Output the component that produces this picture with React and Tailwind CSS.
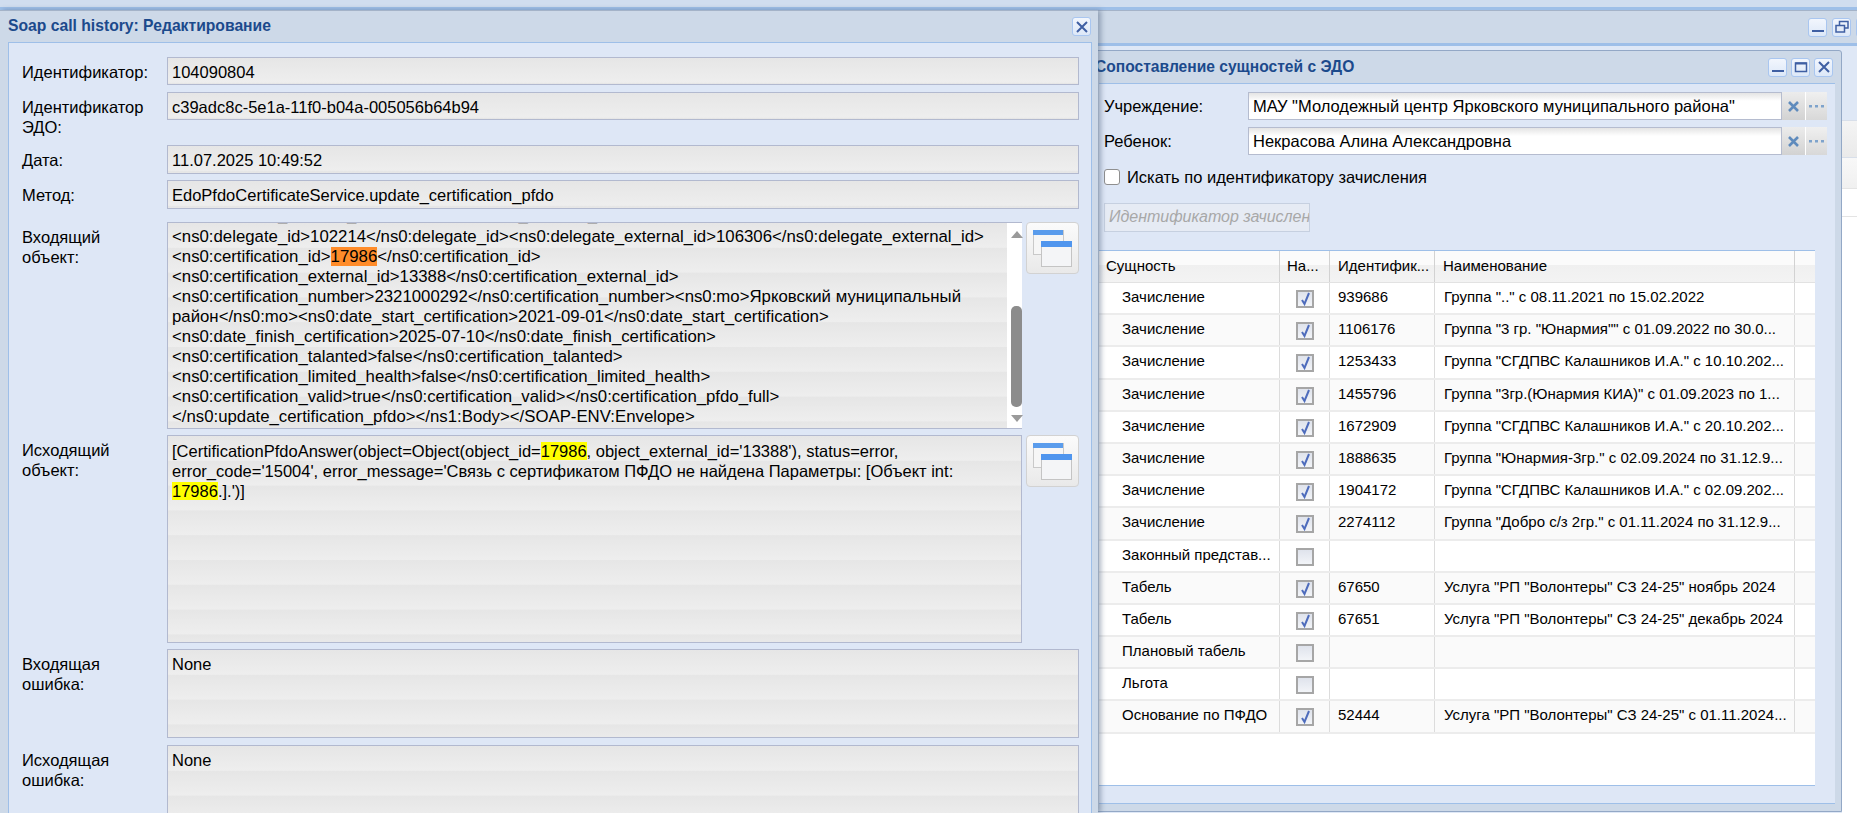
import React from "react";

const stripes =
  "bg-[linear-gradient(#e6e6e6,#eeeeee)] bg-[length:100%_24.8px] bg-repeat";

const gridRows = [
  ["Зачисление", true, "939686", 'Группа ".." с 08.11.2021 по 15.02.2022'],
  ["Зачисление", true, "1106176", 'Группа "3 гр. "Юнармия"" с 01.09.2022 по 30.0...'],
  ["Зачисление", true, "1253433", 'Группа "СГДПВС Калашников И.А." с 10.10.202...'],
  ["Зачисление", true, "1455796", 'Группа "3гр.(Юнармия КИА)" с 01.09.2023 по 1...'],
  ["Зачисление", true, "1672909", 'Группа "СГДПВС Калашников И.А." с 20.10.202...'],
  ["Зачисление", true, "1888635", 'Группа "Юнармия-3гр." с 02.09.2024 по 31.12.9...'],
  ["Зачисление", true, "1904172", 'Группа "СГДПВС Калашников И.А." с 02.09.202...'],
  ["Зачисление", true, "2274112", 'Группа "Добро с/з 2гр." с 01.11.2024 по 31.12.9...'],
  ["Законный представ...", false, "", ""],
  ["Табель", true, "67650", 'Услуга "РП "Волонтеры" СЗ 24-25" ноябрь 2024'],
  ["Табель", true, "67651", 'Услуга "РП "Волонтеры" СЗ 24-25" декабрь 2024'],
  ["Плановый табель", false, "", ""],
  ["Льгота", false, "", ""],
  ["Основание по ПФДО", true, "52444", 'Услуга "РП "Волонтеры" СЗ 24-25" с 01.11.2024...'],
];

function HeaderBtn({ children }) {
  return (
    <div className="w-[19px] h-[19px] shrink-0 rounded-[3px] border border-[#a9c6f0] bg-[linear-gradient(#f2f6fd,#dde8f8)] flex items-center justify-center">
      <svg width="14" height="14" viewBox="0 0 14 14" fill="none" stroke="#3f5fa3" strokeWidth="2">
        {children}
      </svg>
    </div>
  );
}

function CloseIcon() {
  return <path d="M2 2l10 10M12 2L2 12" />;
}

function MinIcon() {
  return <path d="M1 11h12" />;
}

function MaxIcon() {
  return (
    <>
      <rect x="1.5" y="3" width="11" height="8.5" strokeWidth="1.5" />
      <path d="M1.5 3.5h11" />
    </>
  );
}

function RestoreIcon() {
  return (
    <>
      <rect x="4.5" y="1.5" width="8.5" height="6.5" strokeWidth="1.5" />
      <rect x="1" y="5.5" width="8.5" height="6.5" strokeWidth="1.5" fill="#e4ecf9" />
    </>
  );
}

function WindowsIcon() {
  return (
    <svg width="40" height="37" viewBox="0 0 40 37">
      <rect x="0.5" y="0.5" width="30" height="24" fill="#f6f6f6" stroke="#c9c9c9" />
      <rect x="0" y="0" width="30" height="5" fill="#5a9cec" />
      <rect x="8.5" y="11.5" width="30" height="25" fill="#f4f5f7" stroke="#c4c4c4" />
      <rect x="8" y="11" width="31" height="6" fill="#4f95ee" />
    </svg>
  );
}

function ExpandBtn() {
  return (
    <div className="w-[53px] h-[52px] ml-[4px] rounded-[4px] border border-[#d2d2d2] bg-[linear-gradient(#fbfbfb,#e9e9e9)] flex items-start justify-start pt-[7px] pl-[6px]">
      <WindowsIcon />
    </div>
  );
}

function FormRow({ label, className, children }) {
  return (
    <div className={`flex ${className}`}>
      <div className="w-[145px] shrink-0 pt-[5px] leading-[20px]">{label}</div>
      {children}
    </div>
  );
}

function ReadField({ value, height }) {
  return (
    <div className={`w-[912px] ${height} border border-[#b2b9cf] ${stripes} px-[4px] pt-[4px] leading-[20px] whitespace-nowrap`}>
      {value}
    </div>
  );
}

function Mark({ color, children }) {
  return <span className={color}>{children}</span>;
}

function Scrollbar() {
  return (
    <div className="w-[15px] shrink-0 bg-white flex flex-col items-end">
      <div className="w-[11px] h-[83px] pt-[8px]">
        <div className="w-0 h-0 border-x-[6px] border-x-transparent border-b-[7px] border-b-[#9a9a9a]" />
      </div>
      <div className="w-[11px] h-[101px] rounded-[5px] bg-[#8c8c8c]" />
      <div className="w-[11px] pt-[8px]">
        <div className="w-0 h-0 border-x-[6px] border-x-transparent border-t-[7px] border-t-[#9a9a9a]" />
      </div>
    </div>
  );
}

function FormDialog() {
  return (
    <div className="absolute left-0 top-[10px] w-[1098px] h-[803px] bg-[#cdd9e8] border-t border-t-[#a4b3c8] shadow-[3px_0_5px_rgba(70,90,120,0.45)] flex flex-col">
      <div className="h-[31px] shrink-0 flex items-center justify-between pl-[8px] pr-[7px]">
        <span className="font-bold text-[#1c4a8c] text-[15.7px] -mt-[2px]">Soap call history: Редактирование</span>
        <HeaderBtn>
          <CloseIcon />
        </HeaderBtn>
      </div>
      <div className="ml-[8px] w-[1084px] flex-1 bg-[#dee7f6] border-x border-t border-[#9ebfe8] pl-[13px] pt-[14px] overflow-hidden text-black">
        <FormRow label="Идентификатор:" className="h-[28px]">
          <ReadField value="104090804" height="h-[28px]" />
        </FormRow>
        <FormRow label={<>Идентификатор<br />ЭДО:</>} className="h-[46px] mt-[7px]">
          <ReadField value="c39adc8c-5e1a-11f0-b04a-005056b64b94" height="h-[28px]" />
        </FormRow>
        <FormRow label="Дата:" className="h-[29px] mt-[7px]">
          <ReadField value="11.07.2025 10:49:52" height="h-[29px]" />
        </FormRow>
        <FormRow label="Метод:" className="h-[29px] mt-[6px]">
          <ReadField value="EdoPfdoCertificateService.update_certification_pfdo" height="h-[29px]" />
        </FormRow>

        <FormRow label={<>Входящий<br />объект:</>} className="h-[207px] mt-[13px]">
          <div className={`w-[855px] h-[207px] border-t border-b border-l border-[#b2b9cf] flex ${stripes}`}>
            <div className="flex-1 overflow-hidden px-[4px] text-[16.8px] leading-[20px] whitespace-nowrap">
              <div className="h-[20px] -mt-[16px] -translate-y-[2px]">{"<ns0:delegate_external_name></ns0:delegate_external_name>"}</div>
              <div>{"<ns0:delegate_id>102214</ns0:delegate_id><ns0:delegate_external_id>106306</ns0:delegate_external_id>"}</div>
              <div>
                {"<ns0:certification_id>"}
                <Mark color="bg-[#ff8c2a]">17986</Mark>
                {"</ns0:certification_id>"}
              </div>
              <div>{"<ns0:certification_external_id>13388</ns0:certification_external_id>"}</div>
              <div>{"<ns0:certification_number>2321000292</ns0:certification_number><ns0:mo>Ярковский муниципальный"}</div>
              <div>{"район</ns0:mo><ns0:date_start_certification>2021-09-01</ns0:date_start_certification>"}</div>
              <div>{"<ns0:date_finish_certification>2025-07-10</ns0:date_finish_certification>"}</div>
              <div>{"<ns0:certification_talanted>false</ns0:certification_talanted>"}</div>
              <div>{"<ns0:certification_limited_health>false</ns0:certification_limited_health>"}</div>
              <div>{"<ns0:certification_valid>true</ns0:certification_valid></ns0:certification_pfdo_full>"}</div>
              <div>{"</ns0:update_certification_pfdo></ns1:Body></SOAP-ENV:Envelope>"}</div>
            </div>
            <Scrollbar />
          </div>
          <ExpandBtn />
        </FormRow>

        <FormRow label={<>Исходящий<br />объект:</>} className="h-[208px] mt-[6px]">
          <div className={`w-[855px] h-[208px] border border-[#b2b9cf] ${stripes} px-[4px] pt-[5px] leading-[20px] whitespace-nowrap`}>
            <div>
              {"[CertificationPfdoAnswer(object=Object(object_id="}
              <Mark color="bg-[#ffff00]">17986</Mark>
              {", object_external_id='13388'), status=error,"}
            </div>
            <div>{"error_code='15004', error_message='Связь с сертификатом ПФДО не найдена Параметры: [Объект int:"}</div>
            <div>
              <Mark color="bg-[#ffff00]">17986</Mark>
              {".].')]"}
            </div>
          </div>
          <ExpandBtn />
        </FormRow>

        <FormRow label={<>Входящая<br />ошибка:</>} className="h-[89px] mt-[6px]">
          <ReadField value="None" height="h-[89px]" />
        </FormRow>
        <FormRow label={<>Исходящая<br />ошибка:</>} className="h-[89px] mt-[7px]">
          <ReadField value="None" height="h-[89px]" />
        </FormRow>
      </div>
    </div>
  );
}

function PickerField({ value, className = "" }) {
  return (
    <div className={`flex h-[28px] ${className}`}>
      <div className="w-[534px] border border-[#b5bccf] bg-[linear-gradient(#e4e4e4,#ffffff_8px)] pl-[4px] leading-[27px] whitespace-nowrap">
        {value}
      </div>
      <div className="w-[24px] bg-[linear-gradient(#ececec,#d2d2d2)] flex items-center justify-center border-r border-white">
        <svg width="11" height="11" viewBox="0 0 11 11" fill="none" stroke="#5f8bbd" strokeWidth="2.6">
          <path d="M1 1l9 9M10 1l-9 9" />
        </svg>
      </div>
      <div className="w-[21px] bg-[linear-gradient(#f0f0f0,#d8d8d8)] flex items-center justify-center">
        <svg width="15" height="3" viewBox="0 0 15 3" fill="#7ea3cc">
          <rect x="0" y="0" width="3" height="2.5" />
          <rect x="6" y="0" width="3" height="2.5" />
          <rect x="12" y="0" width="3" height="2.5" />
        </svg>
      </div>
    </div>
  );
}

function GridCheck({ checked }) {
  return (
    <div className="w-[18px] h-[18px] border-2 border-[#a6a6a6] bg-[linear-gradient(#dfe3ec,#f2f4f8)] flex items-center justify-center">
      {checked && (
        <svg width="12" height="14" viewBox="0 0 12 14" fill="none" stroke="#4e6cbc" strokeWidth="2">
          <path d="M3 8l2.5 4L10 1" />
        </svg>
      )}
    </div>
  );
}

function HeadCell({ className, children }) {
  return (
    <div className={`${className} h-full border-r border-[#d2d2d2] flex items-center whitespace-nowrap overflow-hidden`}>
      {children}
    </div>
  );
}

function Grid() {
  return (
    <div className="ml-[-5px] mt-[18px] w-[716px] h-[536px] bg-white border-y border-[#9ebfe8] overflow-hidden text-[15px]">
      <div className="h-[32px] flex bg-[linear-gradient(#fbfbfb_45%,#f0f0f0_45%,#f3f3f3)] border-b border-[#e2e2e2]">
        <HeadCell className="w-[181px] pl-[7px]">Сущность</HeadCell>
        <HeadCell className="w-[50px] pl-[7px]">На...</HeadCell>
        <HeadCell className="w-[105px] pl-[8px]">Идентифик...</HeadCell>
        <HeadCell className="w-[360px] pl-[8px]">Наименование</HeadCell>
      </div>
      {gridRows.map((row, i) => (
        <div
          key={i}
          className={`h-[32.2px] flex border-b-2 border-[#ececec] ${i % 2 === 0 ? "bg-white" : "bg-[#fafafa]"}`}
        >
          <div className="w-[181px] pl-[23px] pt-[3px] border-r border-[#dcdcdc] whitespace-nowrap overflow-hidden">{row[0]}</div>
          <div className="w-[50px] pl-[16px] pt-[7px] border-r border-[#dcdcdc]">
            <GridCheck checked={row[1]} />
          </div>
          <div className="w-[105px] pl-[8px] pt-[3px] border-r border-[#dcdcdc]">{row[2]}</div>
          <div className="w-[360px] pl-[9px] pt-[3px] border-r border-[#dcdcdc] whitespace-nowrap overflow-hidden">{row[3]}</div>
        </div>
      ))}
    </div>
  );
}

function EntityWindow() {
  return (
    <div className="absolute left-[1090px] top-[50px] w-[752px] h-[762px] bg-[#cdd9e8] border border-[#93a8c6] rounded-t-[3px] flex flex-col">
      <div className="h-[32px] shrink-0 flex items-center justify-between pl-[4px] pr-[8px]">
        <span className="font-bold text-[#1c4a8c] text-[15.6px]">Сопоставление сущностей с ЭДО</span>
        <div className="flex gap-[4px]">
          <HeaderBtn><MinIcon /></HeaderBtn>
          <HeaderBtn><MaxIcon /></HeaderBtn>
          <HeaderBtn><CloseIcon /></HeaderBtn>
        </div>
      </div>
      <div className="ml-[8px] w-[736px] h-[721px] bg-[#dee7f6] border-y border-[#9ebfe8] pl-[5px] pt-[8px] text-black">
        <div className="flex items-center">
          <div className="w-[144px] shrink-0">Учреждение:</div>
          <PickerField value={'МАУ "Молодежный центр Ярковского муниципального района"'} />
        </div>
        <div className="flex items-center mt-[7px]">
          <div className="w-[144px] shrink-0">Ребенок:</div>
          <PickerField value="Некрасова Алина Александровна" />
        </div>
        <div className="flex items-center mt-[12px] gap-[7px] leading-[20px]">
          <div className="w-[16px] h-[16px] rounded-[3px] border border-[#8f8f8f] bg-white" />
          <span>Искать по идентификатору зачисления</span>
        </div>
        <div className="mt-[16px] w-[206px] h-[29px] border border-[#c6d0e0] bg-[#e6ebf4] pl-[4px] text-[16px] leading-[26px] italic text-[#a8a8a8] whitespace-nowrap overflow-hidden">
          Идентификатор зачислен
        </div>
        <Grid />
      </div>
    </div>
  );
}

function MainWindow() {
  return (
    <div className="absolute left-0 top-[7px] w-[1857px] h-[806px] bg-[#dfe8f6] border-t-[3px] border-[#9ebfe8]">
      <div className="h-[32px] bg-[#cdd9e8] border-t border-[#a4b3c8] border-b-[3px] border-b-[#9ebfe8] box-content flex items-center justify-end gap-[5px] overflow-hidden">
        <HeaderBtn><MinIcon /></HeaderBtn>
        <HeaderBtn><RestoreIcon /></HeaderBtn>
        <div className="-mr-[18px]">
          <HeaderBtn><CloseIcon /></HeaderBtn>
        </div>
      </div>
      {/* grid behind the windows, only its edge shows */}
      <div className="absolute left-[1842px] top-[110px] w-[15px] h-[696px] bg-white">
        <div className="h-[38px] border-y border-[#d8dfea] bg-[linear-gradient(#f4f4f4,#eaeaea)]" />
        <div className="h-[31px] bg-[linear-gradient(#f8f8f8,#f0f0f0)] border-b border-[#e4e4e4]" />
        <div className="h-[28px] border-b border-[#e4e4e4]" />
      </div>
    </div>
  );
}

export default function App() {
  return (
    <div className="relative w-[1857px] h-[813px] overflow-hidden bg-[#d0ddef] text-[16.5px] font-['Liberation_Sans',Arial,sans-serif]">
      <MainWindow />
      <EntityWindow />
      <FormDialog />
    </div>
  );
}
